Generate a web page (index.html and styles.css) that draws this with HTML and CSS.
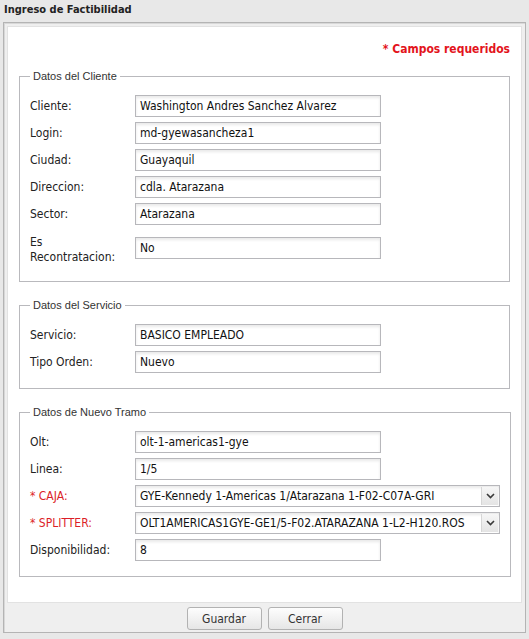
FILE: index.html
```html
<!DOCTYPE html>
<html lang="es">
<head>
<meta charset="utf-8">
<title>Ingreso de Factibilidad</title>
<link rel="stylesheet" href="styles.css">
</head>
<body>
<div class="title">Ingreso de Factibilidad</div>
<div class="panel">
  <div class="content">
    <div class="req">* Campos requeridos</div>

    <fieldset class="group">
      <legend>Datos del Cliente</legend>
      <div class="row"><label>Cliente:</label><div class="input">Washington Andres Sanchez Alvarez</div></div>
      <div class="row"><label>Login:</label><div class="input">md-gyewasancheza1</div></div>
      <div class="row"><label>Ciudad:</label><div class="input">Guayaquil</div></div>
      <div class="row"><label>Direccion:</label><div class="input">cdla. Atarazana</div></div>
      <div class="row"><label>Sector:</label><div class="input">Atarazana</div></div>
      <div class="row row-tall"><label>Es<br>Recontratacion:</label><div class="input">No</div></div>
    </fieldset>

    <fieldset class="group">
      <legend>Datos del Servicio</legend>
      <div class="row"><label>Servicio:</label><div class="input">BASICO EMPLEADO</div></div>
      <div class="row"><label>Tipo Orden:</label><div class="input">Nuevo</div></div>
    </fieldset>

    <fieldset class="group">
      <legend>Datos de Nuevo Tramo</legend>
      <div class="row"><label>Olt:</label><div class="input">olt-1-americas1-gye</div></div>
      <div class="row"><label>Linea:</label><div class="input">1/5</div></div>
      <div class="row"><label class="required">* CAJA:</label>
        <div class="select"><span class="sel-text">GYE-Kennedy 1-Americas 1/Atarazana 1-F02-C07A-GRI</span><span class="arrow"><svg width="9" height="6" viewBox="0 0 9 6"><path d="M1 1 L4.5 4.5 L8 1" fill="none" stroke="#3a3a3a" stroke-width="1.6"/></svg></span></div>
      </div>
      <div class="row"><label class="required">* SPLITTER:</label>
        <div class="select"><span class="sel-text">OLT1AMERICAS1GYE-GE1/5-F02.ATARAZANA 1-L2-H120.ROS</span><span class="arrow"><svg width="9" height="6" viewBox="0 0 9 6"><path d="M1 1 L4.5 4.5 L8 1" fill="none" stroke="#3a3a3a" stroke-width="1.6"/></svg></span></div>
      </div>
      <div class="row"><label>Disponibilidad:</label><div class="input">8</div></div>
    </fieldset>
  </div>
  <div class="buttons">
    <button class="btn">Guardar</button>
    <button class="btn">Cerrar</button>
  </div>
</div>
</body>
</html>
```
FILE: styles.css
```css
html, body {
  margin: 0;
  padding: 0;
  background: #e8e8e8;
}
body {
  font-family: "DejaVu Sans Condensed", "DejaVu Sans", sans-serif;
  font-size: 12px;
  color: #222;
  width: 529px;
  height: 639px;
  overflow: hidden;
}
.title {
  height: 22px;
  line-height: 19px;
  padding-left: 4px;
  font-weight: bold;
  font-size: 11px;
  color: #222;
}
.panel {
  margin: 0 3px 0 3px;
  border: 1px solid #b4b4b4;
  box-shadow: inset 1px 1px 0 #d8d8d8;
  background: #efefef;
  padding: 4px 4px 0 4px;
  height: 611px;
  box-sizing: border-box;
}
.content {
  background: #fff;
  padding: 14px 11px 25px 11px;
  box-shadow: 0 0 0 1px #e2e2e2;
}
.req {
  text-align: right;
  color: #e3141c;
  font-weight: bold;
  font-size: 12px;
  line-height: 16px;
  margin-bottom: 12px;
}
.group {
  border: 1px solid #b9b9bd;
  margin: 0 0 16px 0;
  padding: 12px 10px 15px 10px;
}
.group:last-child { margin-bottom: 0; }
.group:first-of-type { padding-bottom: 16px; }
legend {
  font-family: "Liberation Sans", Arial, sans-serif;
  font-size: 11px;
  line-height: 14px;
  color: #333;
  padding: 0 3px;
  margin-left: 0;
}
.row {
  display: flex;
  align-items: center;
  margin-bottom: 5px;
}
.row:last-child { margin-bottom: 0; }
.row label {
  width: 105px;
  flex: none;
  line-height: 15px;
}
.row-tall {
  align-items: flex-start;
  margin-top: 10px;
}
.row-tall .input { margin-top: 2px; }
.required { color: #dc1e28; }
.input, .select {
  box-sizing: border-box;
  height: 22px;
  border: 1px solid #b7b7bb;
  background: #fff;
  box-shadow: inset 0 2px 3px rgba(0, 0, 0, 0.09);
  padding: 0 4px;
  line-height: 20px;
  color: #111;
  white-space: nowrap;
  overflow: hidden;
}
.input { width: 246px; }
.select {
  width: 365px;
  display: flex;
  padding-right: 1px;
}
.sel-text {
  flex: 1;
  overflow: hidden;
}
.arrow {
  width: 16px;
  height: 18px;
  margin-top: 1px;
  flex: none;
  background: linear-gradient(#f6f6f6, #e4e4e4);
  border-left: 1px solid #d6d6d6;
  display: flex;
  align-items: center;
  justify-content: center;
}
.arrow svg { display: block; }
.buttons {
  display: flex;
  justify-content: center;
  gap: 6px;
  padding-top: 5px;
}
.btn {
  font-family: "DejaVu Sans Condensed", "DejaVu Sans", sans-serif;
  font-size: 12px;
  color: #333;
  width: 75px;
  height: 23px;
  border: 1px solid #b2b2b2;
  border-radius: 3px;
  background: linear-gradient(#fdfdfd, #e6e6e6);
  padding: 0;
}
```
